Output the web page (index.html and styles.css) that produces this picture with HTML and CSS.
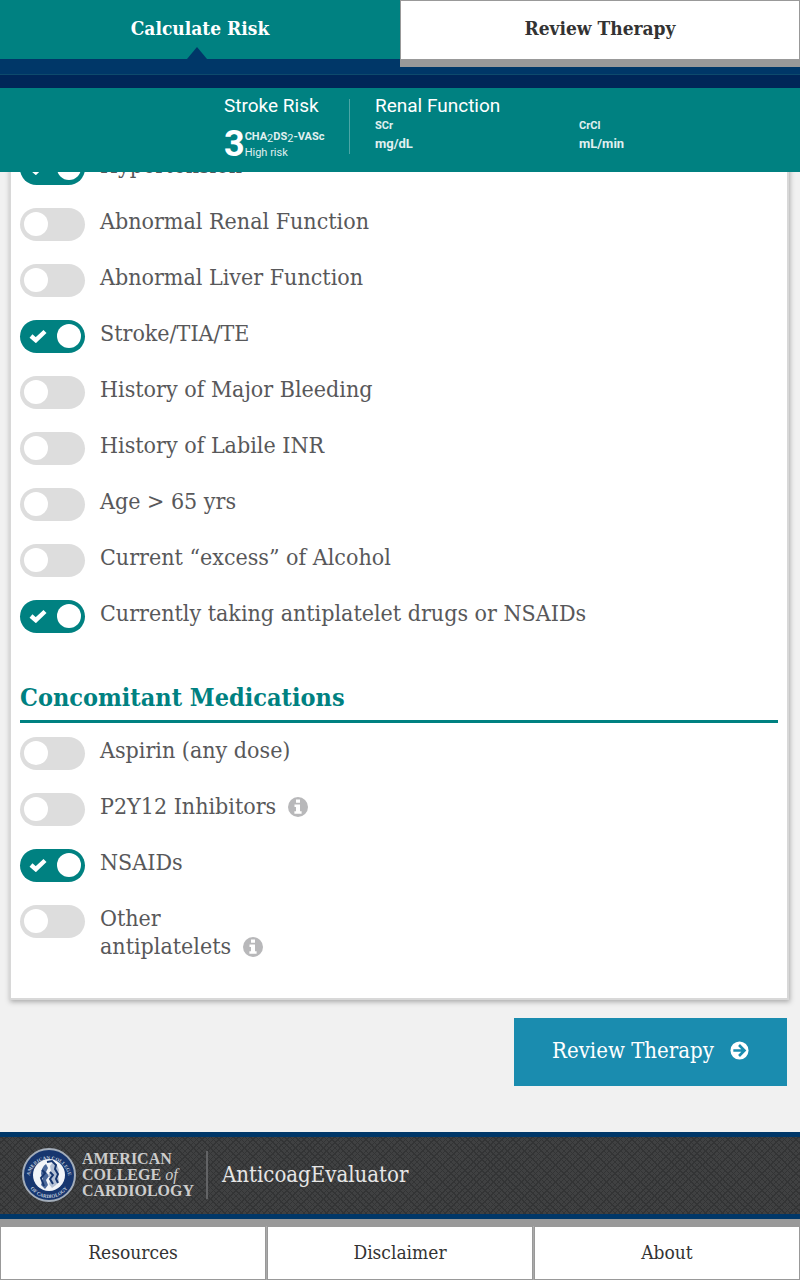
FILE: index.html
```
<!DOCTYPE html>
<html lang="en">
	<head>
		<meta charset="utf-8">
		<meta name="viewport" content="width=device-width, initial-scale=1">
		<title>AnticoagEvaluator</title>
		<link rel="stylesheet" href="styles.css">
	</head>
	<body>
		<svg class="sprite" aria-hidden="true">
			<symbol id="check" viewBox="0 0 18 14">
				<path d="M2 7 L6.8 11.2 L16 2.5" fill="none" stroke="#fff" stroke-width="4.4"/>
			</symbol>
			<symbol id="info" viewBox="0 0 20 20">
				<circle cx="10" cy="10" r="10" fill="#b8b8ba"/>
				<path d="M8 2.5h4v3.3H8zM6.5 7.5H12v6.8h1.6v2.4H6.4v-2.4H8V10H6.5z" fill="#fff"/>
			</symbol>
			<symbol id="arrow" viewBox="0 0 20 20">
				<circle cx="10" cy="10" r="9.5" fill="#fff"/>
				<path d="M3.5 10H15M9.5 4.2L15.2 10L9.5 15.8" fill="none" stroke="#1a8caf" stroke-width="2.8"/>
			</symbol>
		</svg>

		<header id="top">
			<nav id="tabs">
				<a href="#risk" class="tab tab_active">Calculate Risk</a>
				<a href="#therapy" class="tab">Review Therapy</a>
			</nav>
			<div id="summary">
				<section id="stroke">
					<h2>Stroke Risk</h2>
					<div id="score">
						<strong>3</strong>
						<div>
							<p class="small_bold">CHA<span class="low">2</span>DS<span class="low">2</span>-VASc</p>
							<p class="small">High risk</p>
						</div>
					</div>
				</section>
				<section id="renal">
					<h2>Renal Function</h2>
					<dl>
						<div><dt>SCr</dt><dd>mg/dL</dd></div>
						<div><dt>CrCl</dt><dd>mL/min</dd></div>
					</dl>
				</section>
			</div>
		</header>

		<main>
			<form id="risk">
				<div class="row">
					<span class="switch"><input type="checkbox" id="hyper" checked><svg><use href="#check"/></svg></span>
					<label for="hyper">Hypertension</label>
				</div>
				<div class="row">
					<span class="switch"><input type="checkbox" id="renal_fn"></span>
					<label for="renal_fn">Abnormal Renal Function</label>
				</div>
				<div class="row">
					<span class="switch"><input type="checkbox" id="liver_fn"></span>
					<label for="liver_fn">Abnormal Liver Function</label>
				</div>
				<div class="row">
					<span class="switch"><input type="checkbox" id="tia" checked><svg><use href="#check"/></svg></span>
					<label for="tia">Stroke/TIA/TE</label>
				</div>
				<div class="row">
					<span class="switch"><input type="checkbox" id="bleeding"></span>
					<label for="bleeding">History of Major Bleeding</label>
				</div>
				<div class="row">
					<span class="switch"><input type="checkbox" id="inr"></span>
					<label for="inr">History of Labile INR</label>
				</div>
				<div class="row">
					<span class="switch"><input type="checkbox" id="age"></span>
					<label for="age">Age &gt; 65 yrs</label>
				</div>
				<div class="row">
					<span class="switch"><input type="checkbox" id="alcohol"></span>
					<label for="alcohol">Current “excess” of Alcohol</label>
				</div>
				<div class="row">
					<span class="switch"><input type="checkbox" id="antiplatelet" checked><svg><use href="#check"/></svg></span>
					<label for="antiplatelet">Currently taking antiplatelet drugs or NSAIDs</label>
				</div>

				<h2>Concomitant Medications</h2>
				<div class="row">
					<span class="switch"><input type="checkbox" id="aspirin"></span>
					<label for="aspirin">Aspirin (any dose)</label>
				</div>
				<div class="row">
					<span class="switch"><input type="checkbox" id="p2y12"></span>
					<label for="p2y12">P2Y12 Inhibitors</label>
					<button type="button" class="info" aria-label="About P2Y12 Inhibitors"><svg><use href="#info"/></svg></button>
				</div>
				<div class="row">
					<span class="switch"><input type="checkbox" id="nsaids" checked><svg><use href="#check"/></svg></span>
					<label for="nsaids">NSAIDs</label>
				</div>
				<div class="row row_last">
					<span class="switch"><input type="checkbox" id="other"></span>
					<label for="other">Other<br>antiplatelets</label>
					<button type="button" class="info" aria-label="About other antiplatelets"><svg><use href="#info"/></svg></button>
				</div>
			</form>
			<button type="button" id="review">Review Therapy <svg><use href="#arrow"/></svg></button>
		</main>

		<footer>
			<div id="brand">
				<svg id="seal" viewBox="0 0 54 54" aria-hidden="true">
					<defs>
						<path id="ring_top" d="M7.5 31 A19.5 19.5 0 1 1 46.5 31"/>
						<path id="ring_bottom" d="M4 27 A23 23 0 0 0 50 27"/>
					</defs>
					<circle cx="27" cy="27" r="26" fill="#17366f" stroke="#a3adba" stroke-width="2"/>
					<circle cx="27" cy="27" r="16" fill="#f2f4f8"/>
					<g fill="#c3cede" font-family="Liberation Serif, serif" font-size="5" font-weight="bold" text-anchor="middle">
						<text><textPath href="#ring_top" startOffset="50%">AMERICAN COLLEGE</textPath></text>
						<text><textPath href="#ring_bottom" startOffset="50%">OF CARDIOLOGY</textPath></text>
					</g>
					<path d="M24 16c-3 2-5 6-5 10l2 5-2 6 4 4 3-4-2-5 3-4-3-4 2-4z" fill="#4b689a"/>
					<path d="M31 14l-3 4 1 5-3 4 3 4-2 5 3 4 4-3 3-4-1-6 1-5-2-5z" fill="#b5c1d5"/>
					<path d="M25 14l5-1 4 4-1 4 3 5-2 5 2 4M20 22l3 3-4 5 3 8M28 24l3 3-3 4 3 5" fill="none" stroke="#17366f" stroke-width="2"/>
				</svg>
				<p id="college">AMERICAN<br>COLLEGE <em>of</em><br>CARDIOLOGY</p>
				<p id="app_name">AnticoagEvaluator</p>
			</div>
			<nav id="links">
				<a href="#resources">Resources</a>
				<a href="#disclaimer">Disclaimer</a>
				<a href="#about">About</a>
			</nav>
		</footer>
	</body>
</html>
```

FILE: styles.css
```
*
{
	box-sizing: border-box;
}
body
{
	margin: 0;
	background: #f1f1f1;
	color: #58585a;
	font-family: "Roboto Slab", "DejaVu Serif Condensed", "DejaVu Serif", serif;
}
h2, p, dl, dd
{
	margin: 0;
}
a
{
	text-decoration: none;
}
button
{
	border: 0;
	padding: 0;
	font-family: inherit;
	cursor: pointer;
}
.sprite
{
	display: none;
}
/*============================*/
#top
{
	position: sticky;
	top: 0;
	z-index: 2;
}
#tabs
{
	display: grid;
	grid-template-columns: 1fr 1fr;
	align-items: start;
	height: 75px;
	background: #003768;
	border-bottom: 1px solid #0d4a6c;
}
.tab
{
	height: 67px;
	border: 1px solid #999;
	border-bottom: 8px solid #999;
	background: #fff;
	color: #333;
	font-size: 19px;
	font-weight: bold;
	line-height: 54px;
	text-align: center;
}
.tab_active
{
	position: relative;
	height: 59px;
	border-color: #008181;
	background: #008181;
	color: #fff;
}
.tab_active::after
{
	content: "";
	position: absolute;
	left: calc(50% - 13px);
	bottom: -8px;
	border: 10px solid transparent;
	border-top: 0;
	border-bottom: 12px solid #003768;
}
#summary
{
	display: grid;
	grid-template-columns: 126px 1fr;
	grid-template-rows: 55px;
	height: 97px;
	padding: 11px 0 18px 28%;
	border-top: 13px solid #002658;
	background: #008181;
	color: #fff;
	font-family: Roboto, sans-serif;
}
#summary h2
{
	font-size: 19px;
	font-weight: normal;
	line-height: 14px;
}
#stroke
{
	border-right: 1px solid #4ca6a6;
}
#renal
{
	padding-left: 25px;
}
#score
{
	display: flex;
	padding-top: 13px;
}
#score strong
{
	font-size: 36px;
	line-height: 36px;
}
.small_bold, .small, dt
{
	font-size: 11px;
	line-height: 16px;
}
.small_bold, dt
{
	font-weight: bold;
	white-space: nowrap;
}
.small_bold
{
	padding-top: 3px;
}
.low
{
	font-weight: normal;
	vertical-align: -2px;
	line-height: 0;
}
.small_bold, .small, dl
{
	color: #e0f0f0;
}
dl
{
	display: grid;
	grid-template-columns: 48% 1fr;
	padding-top: 5px;
}
dd
{
	font-size: 13px;
	font-weight: bold;
	line-height: 20px;
}
/*============================*/
/* first row slides up under the sticky header */
main
{
	margin-top: -30px;
	padding: 0 11px 46px 9px;
}
#risk
{
	padding: 8px 9px 10px;
	border: 2px solid #d8d8d8;
	background: #fff;
	box-shadow: 1px 2px 5px #aaa;
}
#risk h2
{
	margin: 24px 0 14px;
	padding-bottom: 4px;
	border-bottom: 3px solid #008181;
	color: #008181;
	font-size: 25px;
	line-height: 36px;
}
.row
{
	display: flex;
	height: 56px;
	font-size: 23px;
	line-height: 28px;
}
.row label
{
	margin-top: -1px;
}
.row_last
{
	height: 83px;
}
.row_last .info
{
	margin-top: 32px;
}
.switch
{
	position: relative;
	flex: none;
	width: 65px;
	height: 33px;
	margin-right: 15px;
}
.switch input
{
	display: flex;
	appearance: none;
	width: 65px;
	height: 33px;
	margin: 0;
	padding: 4px;
	border-radius: 17px;
	background: #ddd;
}
.switch input::before
{
	content: "";
	width: 24px;
	height: 24px;
	border-radius: 50%;
	background: #fff;
}
.switch input:checked
{
	justify-content: flex-end;
	background: #008181;
}
.switch svg
{
	position: absolute;
	left: 9px;
	top: 9px;
	width: 18px;
	height: 14px;
	pointer-events: none;
}
.info
{
	width: 20px;
	height: 20px;
	margin: 4px 0 0 12px;
	background: none;
}
.info svg
{
	display: block;
	width: 20px;
	height: 20px;
}
#review
{
	display: flex;
	align-items: center;
	justify-content: center;
	gap: 16px;
	width: 273px;
	height: 68px;
	margin: 18px 2px 0 auto;
	padding-bottom: 3px;
	background: #1a8caf;
	color: #fff;
	font-size: 22px;
}
#review svg
{
	width: 19px;
	height: 19px;
}
/*============================*/
#brand
{
	display: flex;
	align-items: center;
	height: 87px;
	padding: 0 22px 2px;
	border-top: 5px solid #003768;
	border-bottom: 5px solid #003768;
	background:
		repeating-linear-gradient(45deg, transparent 0 3px, #333435 3px 4px),
		repeating-linear-gradient(-45deg, transparent 0 3px, #333435 3px 4px),
		#404142;
}
#seal
{
	width: 54px;
	height: 54px;
}
#college
{
	width: 126px;
	margin: 0 14px 0 6px;
	border-right: 2px solid #626365;
	color: #ccc;
	font-family: "Liberation Serif", serif;
	font-size: 16px;
	font-weight: bold;
	line-height: 16px;
}
#college em
{
	font-weight: normal;
}
#app_name
{
	color: #e6e6e6;
	font-size: 22px;
}
#links
{
	display: grid;
	grid-template-columns: 1fr 1fr 1fr;
	gap: 1px;
	border-top: 7px solid #999;
	background: #aaa;
}
#links a
{
	height: 54px;
	border: 1px solid #999;
	background: #fff;
	color: #333;
	font-size: 19px;
	line-height: 50px;
	text-align: center;
}
```
